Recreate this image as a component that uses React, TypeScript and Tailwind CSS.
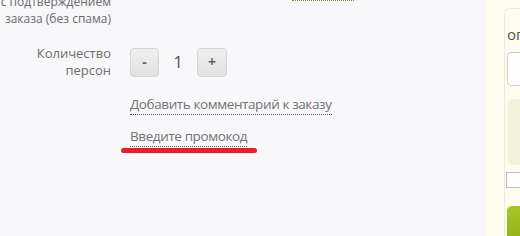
import React from "react";

export default function App() {
  const font = { fontFamily: '"Open Sans", "Noto Sans", sans-serif' };
  return (
    <div className="w-[520px] h-[236px] overflow-hidden flex bg-[#f8f8fa]" style={font}>
      <div className="w-[486px] shrink-0 relative">
        <div className="absolute left-[292px] top-0 w-[62px] border-t border-dotted border-[#8a8a3a]" />
        <div className="w-[111px] mt-[-7px] flex flex-col items-end text-[12px] leading-[17px] text-[#6a6a6a]">
          <div className="whitespace-nowrap">те с подтверждением</div>
          <div className="whitespace-nowrap">заказа (без спама)</div>
        </div>
        <div className="flex items-center mt-[18px]">
          <div className="w-[111px] text-right text-[13px] leading-[17px] text-[#6e6e6e]">
            <div>Количество</div>
            <div>персон</div>
          </div>
          <div className="flex items-center ml-[19px]">
            <button className="w-[29px] h-[29px] rounded-[4px] border border-[#d4d4d4] bg-gradient-to-b from-[#efefef] to-[#e2e2e2] text-[#666] text-[14px] font-bold leading-none">
              -
            </button>
            <span className="w-[38px] text-center text-[17px] text-[#555]">1</span>
            <button className="w-[30px] h-[29px] rounded-[4px] border border-[#d4d4d4] bg-gradient-to-b from-[#efefef] to-[#e2e2e2] text-[#666] text-[14px] font-bold leading-none">
              +
            </button>
          </div>
        </div>
        <div className="ml-[130px] mt-[17px] flex flex-col items-start gap-[13px]">
          <span className="text-[13.5px] tracking-[-0.4px] leading-[17px] text-[#737373] border-b border-dotted border-[#555] pb-[1px]">
            Добавить комментарий к заказу
          </span>
          <span className="text-[13.5px] tracking-[-0.4px] leading-[17px] text-[#737373] border-b border-dotted border-[#555] pb-[1px]">
            Введите промокод
          </span>
        </div>
        <div className="ml-[121px] mt-[1px] w-[136px] h-[5px] rounded-full bg-[#e81f2b]" />
      </div>
      <div className="w-px bg-[#e6e6e0]" />
      <div className="flex-1 bg-[#fdfcef] pl-[18px] pt-[8px]">
        <div className="border-t border-l border-[#ecebdc] rounded-tl-[6px] pl-[2px] pt-[16px]">
          <div className="text-[15px] leading-[18px] text-[#555] whitespace-nowrap">оп</div>
          <div className="mt-[9px] h-[34px] bg-white border border-[#cfcfcf] rounded-l-[4px]" />
          <div className="mt-[13px] ml-[1px] h-[66px] bg-[#f3f3dd] rounded-l-[5px]" />
          <div className="mt-[7px] ml-[-1px] h-[16px] bg-white border border-[#bdbdbd]" />
          <div className="mt-[18px] h-[40px] rounded-tl-[5px] bg-gradient-to-b from-[#a6c623] to-[#8fb012]" />
        </div>
      </div>
    </div>
  );
}
